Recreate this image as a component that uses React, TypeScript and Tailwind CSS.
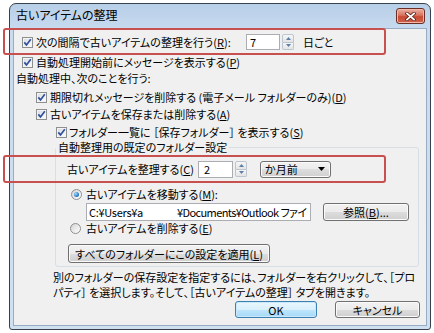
import type { ReactNode } from 'react';

const btn =
  'flex items-center justify-center rounded-[3px] border border-[#707070] bg-[linear-gradient(#f2f2f2,#ebebeb_50%,#dddddd_50%,#cfcfcf)] shadow-[inset_0_0_0_1px_#fbfbfb]';

function Key({ k }: { k: string }) {
  return (
    <>
      (<span className="underline decoration-1 underline-offset-[1px]">{k}</span>)
    </>
  );
}

function CheckBox() {
  return (
    <span className="flex h-[11px] w-[11px] shrink-0 items-center justify-center border border-[#8e8f8f] bg-[linear-gradient(135deg,#d6d9de,#ffffff)] shadow-[inset_0_0_0_1px_#f4f4f4]">
      <svg width="9" height="9" viewBox="0 0 9 9">
        <path d="M1.3 4.4 L3.5 6.9 L7.8 1.3" fill="none" stroke="#2f4f9e" strokeWidth="1.7" />
      </svg>
    </span>
  );
}

function Radio({ on }: { on?: boolean }) {
  return (
    <span className="flex h-[11px] w-[11px] shrink-0 items-center justify-center rounded-full border border-[#8e8f8f] bg-[linear-gradient(135deg,#d4d4d4,#ffffff)]">
      {on && (
        <span className="h-[5px] w-[5px] rounded-full bg-[radial-gradient(circle_at_35%_35%,#a8ddfa,#2a7fc9_60%,#12508f)]" />
      )}
    </span>
  );
}

function Spin() {
  return (
    <span className="flex h-[16px] w-[12px] shrink-0 flex-col">
      <span className="flex flex-1 items-center justify-center rounded-t-[2px] border border-[#bcc6d0] bg-[linear-gradient(#f6f6f6,#e4e4e4)]">
        <svg width="5" height="3" viewBox="0 0 5 3">
          <path d="M0 3 L2.5 0 L5 3Z" fill="#5b7fa8" />
        </svg>
      </span>
      <span className="flex flex-1 items-center justify-center rounded-b-[2px] border border-t-0 border-[#bcc6d0] bg-[linear-gradient(#f6f6f6,#e4e4e4)]">
        <svg width="5" height="3" viewBox="0 0 5 3">
          <path d="M0 0 L2.5 3 L5 0Z" fill="#5b7fa8" />
        </svg>
      </span>
    </span>
  );
}

function Row({ className, children }: { className: string; children: ReactNode }) {
  return <div className={`flex items-center whitespace-nowrap ${className}`}>{children}</div>;
}

export default function App() {
  return (
    <div className="relative h-[333px] w-[434px] overflow-hidden bg-white pl-[9px] pt-[3px] font-['Noto_Sans_CJK_JP','Noto_Sans_CJK_SC',sans-serif] text-[11px] leading-[14px] text-black [font-feature-settings:'palt']">
      <div className="flex h-[327px] w-[422px] flex-col rounded-t-[7px] rounded-b-[3px] border border-[#38414c] bg-[linear-gradient(#b8cfe8,#c8dbef_26px,#cfe0f1)] px-[3px] pb-[3px]">
        <div className="flex h-[24px] shrink-0 items-start justify-between">
          <span className="ml-[3px] mt-[3px] text-[12px] leading-[16px]">古いアイテムの整理</span>
          <span className="mr-[2px] mt-[4px] flex h-[16px] w-[29px] items-center justify-center rounded-[3px] border border-[#6b2e22] bg-[linear-gradient(#eab0a2,#d9725f_45%,#c84a33_55%,#d0624c)] shadow-[inset_0_0_0_1px_#f0b9ac]">
            <svg width="11" height="9" viewBox="0 0 11 9">
              <path d="M2 1.5 L9 7.5 M9 1.5 L2 7.5" stroke="#5a1d12" strokeWidth="3.4" strokeLinecap="square" />
              <path d="M2 1.5 L9 7.5 M9 1.5 L2 7.5" stroke="#ffffff" strokeWidth="1.8" strokeLinecap="square" />
            </svg>
          </span>
        </div>

        <div className="flex-1 border border-[#98acc3] bg-[#f0f0f0]">
          <Row className="mt-[5px] h-[16px] pl-[8px]">
            <div className="flex w-[224px] items-center gap-[3px]">
              <CheckBox />
              <span>
                次の間隔で古いアイテムの整理を行う<Key k="R" />:
              </span>
            </div>
            <span className="flex h-[16px] w-[34px] items-center border border-[#abadb3] bg-white pl-[3px]">7</span>
            <span className="ml-[2px]">
              <Spin />
            </span>
            <span className="ml-[9px]">日ごと</span>
          </Row>

          <Row className="mt-[5px] h-[14px] gap-[3px] pl-[8px]">
            <CheckBox />
            <span>
              自動処理開始前にメッセージを表示する<Key k="P" />
            </span>
          </Row>

          <Row className="mt-[2px] h-[14px] pl-[2px]">
            <span>自動処理中、次のことを行う:</span>
          </Row>

          <Row className="mt-[5px] h-[14px] gap-[3px] pl-[22px]">
            <CheckBox />
            <span>
              期限切れメッセージを削除する (電子メール フォルダーのみ)<Key k="D" />
            </span>
          </Row>

          <Row className="mt-[3px] h-[14px] gap-[3px] pl-[22px]">
            <CheckBox />
            <span>
              古いアイテムを保存または削除する<Key k="A" />
            </span>
          </Row>

          <Row className="mt-[4px] h-[14px] gap-[2px] pl-[42px]">
            <CheckBox />
            <span>
              フォルダー一覧に ［保存フォルダー］ を表示する<Key k="S" />
            </span>
          </Row>

          <fieldset className="ml-[41px] mt-[1px] w-[364px] rounded-[3px] border border-[#d5dfe5] pb-[3px]">
            <legend className="h-[14px] whitespace-nowrap px-[2px] leading-[14px]">自動整理用の既定のフォルダー設定</legend>

            <Row className="mt-[6px] h-[18px] pl-[11px]">
              <span className="w-[131px]">
                古いアイテムを整理する<Key k="C" />
              </span>
              <span className="flex h-[17px] w-[35px] items-center border border-[#abadb3] bg-white pl-[5px]">2</span>
              <span className="ml-[2px]">
                <Spin />
              </span>
              <span className={`${btn} ml-[13px] h-[17px] w-[71px] !justify-between pl-[4px] pr-[5px]`}>
                <span>か月前</span>
                <svg width="7" height="4" viewBox="0 0 7 4">
                  <path d="M0 0 L7 0 L3.5 4Z" fill="#000" />
                </svg>
              </span>
            </Row>

            <Row className="mt-[9px] h-[14px] gap-[4px] pl-[15px]">
              <Radio on />
              <span>
                古いアイテムを移動する<Key k="M" />:
              </span>
            </Row>

            <Row className="mt-[2px] h-[18px] pl-[30px]">
              <span className="block h-[18px] w-[225px] overflow-hidden whitespace-nowrap border border-[#abadb3] bg-white pl-[2px] leading-[16px]">
                <span className="tracking-[-0.3px]">C:¥Users¥a</span>
                <span className="inline-block w-[34px]" />
                <span className="tracking-[-0.6px]">¥Documents¥Outlook ファイ</span>
              </span>
              <span className={`${btn} ml-[12px] h-[18px] w-[86px]`}>
                参照<Key k="B" />...
              </span>
            </Row>

            <Row className="h-[14px] gap-[5px] pl-[14px]">
              <Radio />
              <span>
                古いアイテムを削除する<Key k="E" />
              </span>
            </Row>

            <Row className="mt-[9px] h-[19px] pl-[12px]">
              <span className={`${btn} h-[19px] w-[202px]`}>
                すべてのフォルダーにこの設定を適用<Key k="L" />
              </span>
            </Row>
          </fieldset>

          <div className="mt-[3px] whitespace-nowrap pl-[39px] leading-[15px]">
            <div>別のフォルダーの保存設定を指定するには、フォルダーを右クリックして、［プロ</div>
            <div>パティ］ を選択します。そして、［古いアイテムの整理］ タブを開きます。</div>
          </div>

          <div className="mt-[1px] flex pl-[221px]">
            <span className="flex h-[17px] w-[82px] items-center justify-center rounded-[3px] border border-[#3c7fb1] bg-[linear-gradient(#eaf6fd,#d9f0fc_50%,#bee6fd_50%,#a7d9f5)] shadow-[inset_0_0_0_1px_#c8eafc]">
              OK
            </span>
            <span className={`${btn} ml-[18px] h-[17px] w-[85px]`}>キャンセル</span>
          </div>
        </div>
      </div>

      <div className="absolute left-[3px] top-[28px] h-[27px] w-[383px] rounded-[3px] border-2 border-[#c8504e]" />
      <div className="absolute left-[3px] top-[155px] h-[28px] w-[383px] rounded-[3px] border-2 border-[#c8504e]" />
    </div>
  );
}
